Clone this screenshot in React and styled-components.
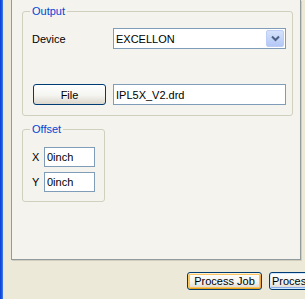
import styled, { createGlobalStyle } from "styled-components";

const GlobalStyle = createGlobalStyle`
  html, body {
    margin: 0;
    padding: 0;
  }
  body {
    background: #ECE9D8;
    font-family: "Liberation Sans", Arial, sans-serif;
    font-size: 11px;
    color: #000;
    overflow: hidden;
  }
`;

const Window = styled.div`
  display: flex;
  width: 305px;
  height: 299px;
  overflow: hidden;
`;

const Frame = styled.div`
  width: 3px;
  flex-shrink: 0;
  background: linear-gradient(90deg, #0A3FD2 0, #1A5FEA 2px, #5A83D8 3px);
`;

const Body = styled.div`
  display: flex;
  flex-direction: column;
  padding-left: 8px;
`;

const TabPage = styled.div`
  box-sizing: border-box;
  width: 290px;
  height: 260px;
  padding: 5px 0 0 10px;
  display: flex;
  flex-direction: column;
  align-items: flex-start;
  gap: 7px;
  background: #F4F3EE;
  border: 1px solid #919B9C;
  border-top: 0;
  box-shadow: 1px 1px 0 #D0CEBF;
`;

const Group = styled.fieldset`
  box-sizing: border-box;
  width: ${({ $width }) => $width}px;
  margin: 0;
  padding: 0 6px ${({ $bottom }) => $bottom}px 9px;
  border: 1px solid #D0D0BF;
  border-radius: 3px;
  min-width: 0;
`;

const Legend = styled.legend`
  margin-left: -2px;
  padding: 0 2px;
  line-height: 13px;
  color: #0046D5;
`;

const Row = styled.div`
  display: flex;
  align-items: center;
  height: ${({ $height }) => $height}px;
  margin-top: ${({ $top }) => $top}px;
`;

const Label = styled.span`
  width: ${({ $width }) => $width}px;
  flex-shrink: 0;
`;

const TextBox = styled.input`
  box-sizing: border-box;
  width: ${({ $width }) => $width}px;
  height: 100%;
  margin: 0 0 0 ${({ $left }) => $left || 0}px;
  padding: 0 2px;
  border: 1px solid #7F9DB9;
  background: #fff;
  font: 11px "Liberation Sans", Arial, sans-serif;
  color: #000;
  outline: none;
`;

const Combo = styled.div`
  box-sizing: border-box;
  width: 174px;
  height: 100%;
  display: flex;
  align-items: center;
  justify-content: space-between;
  padding: 0 1px 0 2px;
  border: 1px solid #7F9DB9;
  background: #fff;
`;

const DropButton = styled.span`
  box-sizing: border-box;
  width: 18px;
  height: 17px;
  display: flex;
  align-items: center;
  justify-content: center;
  border: 1px solid #BCCEF5;
  border-radius: 2px;
  background: linear-gradient(#D6E2FC, #B4C8F6);
`;

const XpButton = styled.button`
  box-sizing: border-box;
  width: ${({ $width }) => $width}px;
  height: ${({ $height }) => $height}px;
  flex-shrink: 0;
  margin: 0 0 0 ${({ $left }) => $left || 0}px;
  padding: ${({ $align }) => ($align === "left" ? "0 0 0 2px" : "0")};
  text-align: ${({ $align }) => $align || "center"};
  white-space: nowrap;
  overflow: hidden;
  font: 11px "Liberation Sans", Arial, sans-serif;
  color: #000;
  border: 1px solid #003C74;
  border-radius: 3px;
  background: linear-gradient(#FFFFFF, #F4F4F0 55%, #DCD7CC);
  box-shadow: ${({ $state }) =>
    $state === "hot"
      ? "inset 0 1px 0 #FFF0CF, inset 1px 0 0 #F9C75A, inset -1px 0 0 #F0A73A, inset 0 -1px 0 #E5A01A, inset 0 0 0 2px #F8C463"
      : $state === "focus"
      ? "inset 0 0 0 1px #CEE7FF, inset 0 -1px 0 1px #8DAEEA"
      : "none"};
`;

const Footer = styled.div`
  display: flex;
  gap: 7px;
  margin-top: 12px;
  padding-left: 176px;
`;

const Chevron = () => (
  <svg width="9" height="7" viewBox="0 0 9 7">
    <polyline points="1,1.5 4.5,5 8,1.5" fill="none" stroke="#4D6185" strokeWidth="2" />
  </svg>
);

export default function App() {
  return (
    <>
      <GlobalStyle />
      <Window>
        <Frame />
        <Body>
          <TabPage>
            <Group $width={271} $bottom={10}>
              <Legend>Output</Legend>
              <Row $height={21} $top={10}>
                <Label $width={81}>Device</Label>
                <Combo>
                  <span>EXCELLON</span>
                  <DropButton>
                    <Chevron />
                  </DropButton>
                </Combo>
              </Row>
              <Row $height={21} $top={35}>
                <XpButton $width={73} $height={21} $left={1}>File</XpButton>
                <TextBox $width={173} $left={7} defaultValue="IPL5X_V2.drd" readOnly />
              </Row>
            </Group>
            <Group $width={83} $bottom={9}>
              <Legend>Offset</Legend>
              <Row $height={20} $top={11}>
                <Label $width={12}>X</Label>
                <TextBox $width={51} defaultValue="0inch" readOnly />
              </Row>
              <Row $height={20} $top={5}>
                <Label $width={12}>Y</Label>
                <TextBox $width={51} defaultValue="0inch" readOnly />
              </Row>
            </Group>
          </TabPage>
          <Footer>
            <XpButton $width={75} $height={18} $state="hot">Process Job</XpButton>
            <XpButton $width={75} $height={18} $state="focus" $align="left">Process</XpButton>
          </Footer>
        </Body>
      </Window>
    </>
  );
}
